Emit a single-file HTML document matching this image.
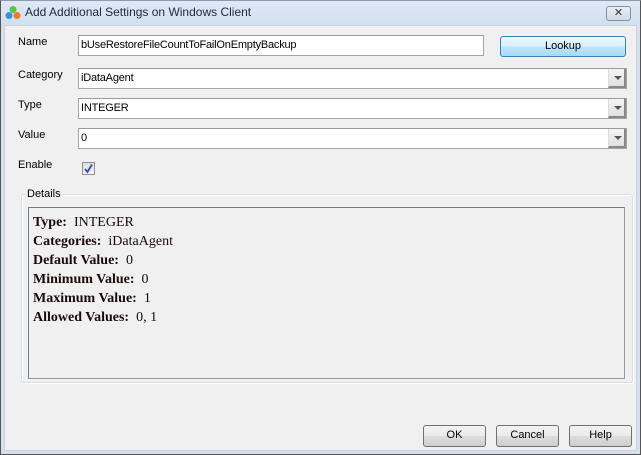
<!DOCTYPE html>
<html><head><style>
*{box-sizing:border-box;margin:0;padding:0}
body{width:641px;height:455px;overflow:hidden;background:#f0f0f0;font-family:"Liberation Sans",sans-serif;font-size:11px;color:#000;position:relative}
.win{position:absolute;left:0;top:0;width:641px;height:455px;border:1px solid #555;border-top-color:#8a9bb0}
.inner{position:absolute;left:4px;top:25px;right:4px;bottom:4px;background:#f0f0f0;border:1px solid #c9d4e0}
.title{position:absolute;left:1px;top:1px;right:1px;height:24px;background:linear-gradient(#dfe9f5,#d2dfee)}
.frameL{position:absolute;left:1px;top:25px;width:4px;bottom:1px;background:#d6e1ee}
.frameR{position:absolute;right:1px;top:25px;width:4px;bottom:1px;background:#d6e1ee}
.frameB{position:absolute;left:1px;right:1px;bottom:1px;height:4px;background:#d6e1ee}
.abs{position:absolute}
.lbl{position:absolute;font-size:11px}
.inp{position:absolute;background:#fff;border:1px solid #a5a5a5;border-top-color:#9a9a9a;font-size:11px;padding:3px 0 0 2px;letter-spacing:-0.2px}
.dd{position:absolute;right:0;top:0;width:18px;height:100%;background:linear-gradient(#f5f5f5,#e1e1e1);border-left:1px solid #ddd;border-right:2px solid #888;border-bottom:2px solid #888}
.dd:after{content:"";position:absolute;left:5px;top:7px;border-left:4px solid transparent;border-right:4px solid transparent;border-top:4px solid #555}
.btn{position:absolute;border:1px solid #707070;border-radius:3px;background:linear-gradient(#f2f2f2 0,#ebebeb 50%,#dddddd 51%,#cfcfcf 100%);text-align:center;font-size:11px;line-height:19px}
.det{font-family:"Liberation Serif",serif;font-size:14px;color:#1a0a0a;position:absolute;left:4px;white-space:nowrap}
.det b{font-weight:bold}
</style></head><body>
<div class="win"></div>
<div class="title"></div>
<div class="frameL"></div><div class="frameR"></div><div class="frameB"></div>
<div class="inner"></div>
<svg class="abs" style="left:5px;top:5px" width="16" height="15" viewBox="0 0 16 15">
<circle cx="8" cy="4.5" r="3.5" fill="#5cc24a"/><circle cx="4" cy="10.5" r="3.5" fill="#3b8fe0"/><circle cx="12" cy="10.5" r="3.5" fill="#f07a2a"/></svg>
<div class="abs" style="left:25px;top:5px;font-size:12px;color:#1e2a3a">Add Additional Settings on Windows Client</div>
<div class="abs" style="left:606px;top:6px;width:25px;height:15px;border:1px solid #8192a8;border-radius:3px;background:linear-gradient(#e8eef6,#d0dbe8);text-align:center;font-size:11px;line-height:12px;color:#333">✕</div>

<div class="lbl" style="left:18px;top:36px">Name</div>
<div class="inp" style="left:78px;top:35px;width:406px;height:21px">bUseRestoreFileCountToFailOnEmptyBackup</div>
<div class="btn" style="left:500px;top:36px;width:126px;height:21px;border-color:#3c7fb1;background:linear-gradient(#eaf6fd 0,#d9f0fc 50%,#bee6fd 51%,#a7d9f5 100%)">Lookup</div>

<div class="lbl" style="left:18px;top:69px">Category</div>
<div class="inp" style="left:78px;top:68px;width:549px;height:21px">iDataAgent<div class="dd"></div></div>
<div class="lbl" style="left:18px;top:99px">Type</div>
<div class="inp" style="left:78px;top:98px;width:549px;height:21px">INTEGER<div class="dd"></div></div>
<div class="lbl" style="left:18px;top:129px">Value</div>
<div class="inp" style="left:78px;top:128px;width:549px;height:21px">0<div class="dd"></div></div>

<div class="lbl" style="left:18px;top:159px">Enable</div>
<div class="abs" style="left:82px;top:162px;width:13px;height:13px;border:1px solid #8f8f8f;background:linear-gradient(#dcdcdc,#f4f4f4)"></div>
<svg class="abs" style="left:83px;top:163px" width="11" height="11" viewBox="0 0 11 11"><path d="M2 6 L4.5 9 L9 1.5" stroke="#2a4fa8" stroke-width="1.8" fill="none"/></svg>

<div class="abs" style="left:21px;top:194px;width:612px;height:189px;border:1px solid #d5dfe5;border-radius:3px;box-shadow:inset 1px 1px 0 #fff,1px 1px 0 #fff"></div>
<div class="abs" style="left:25px;top:188px;background:#f0f0f0;padding:0 2px">Details</div>
<div class="abs" style="left:28px;top:207px;width:597px;height:172px;border:1px solid #7a7a7a;border-right-color:#999;border-bottom-color:#999">
<div class="det" style="top:7px"><b>Type:</b>&nbsp; INTEGER</div>
<div class="det" style="top:26px"><b>Categories:</b>&nbsp; iDataAgent</div>
<div class="det" style="top:45px"><b>Default Value:</b>&nbsp; 0</div>
<div class="det" style="top:64px"><b>Minimum Value:</b>&nbsp; 0</div>
<div class="det" style="top:83px"><b>Maximum Value:</b>&nbsp; 1</div>
<div class="det" style="top:102px"><b>Allowed Values:</b>&nbsp; 0, 1</div>
</div>

<div class="btn" style="left:423px;top:425px;width:63px;height:22px">OK</div>
<div class="btn" style="left:496px;top:425px;width:63px;height:22px">Cancel</div>
<div class="btn" style="left:569px;top:425px;width:63px;height:22px">Help</div>
</body></html>
